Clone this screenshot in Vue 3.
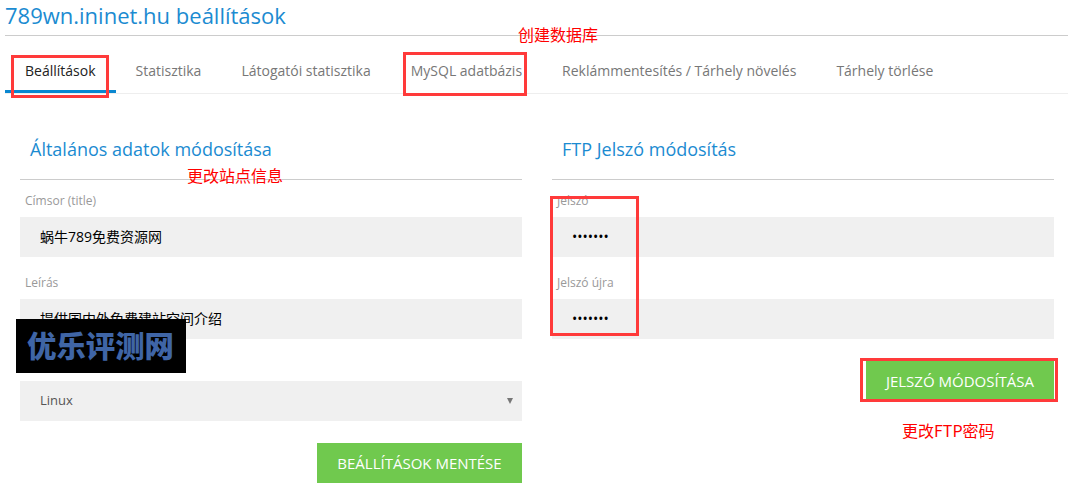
<script setup>
const tabs = [
  'Beállítások',
  'Statisztika',
  'Látogatói statisztika',
  'MySQL adatbázis',
  'Reklámmentesítés / Tárhely növelés',
  'Tárhely törlése',
]
</script>

<template>
  <div class="page">
    <h1 class="title">789wn.ininet.hu beállítások</h1>
    <nav class="tabs">
      <a v-for="(t, i) in tabs" :key="t" class="tab" :class="{ active: i === 0 }">{{ t }}</a>
    </nav>
    <div class="cols">
      <section class="col">
        <h2 class="heading">Általános adatok módosítása</h2>
        <div class="form">
          <div class="field">
            <label>Címsor (title)</label>
            <input class="control" type="text" value="蜗牛789免费资源网" />
          </div>
          <div class="field">
            <label>Leírás</label>
            <input class="control" type="text" value="提供国内外免费建站空间介绍" />
          </div>
          <div class="field">
            <label>&nbsp;</label>
            <div class="select-wrap">
              <select class="control select"><option>Linux</option></select>
              <span class="arrow"></span>
            </div>
          </div>
          <div class="actions"><button class="btn" type="button">BEÁLLÍTÁSOK MENTÉSE</button></div>
        </div>
      </section>
      <section class="col">
        <h2 class="heading">FTP Jelszó módosítás</h2>
        <div class="form">
          <div class="field">
            <label>Jelszó</label>
            <input class="control pass" type="password" value="1234567" />
          </div>
          <div class="field">
            <label>Jelszó újra</label>
            <input class="control pass" type="password" value="1234567" />
          </div>
          <div class="actions"><button class="btn narrow" type="button">JELSZÓ MÓDOSÍTÁSA</button></div>
        </div>
      </section>
    </div>

    <div class="mark box-a"></div>
    <div class="mark box-b"></div>
    <div class="mark box-c"></div>
    <div class="mark box-d"></div>
    <span class="note note-a">创建数据库</span>
    <span class="note note-b">更改站点信息</span>
    <span class="note note-c">更改FTP密码</span>
    <div class="stamp">优乐评测网</div>
  </div>
</template>

<style>
html, body { margin: 0; background: #fff; }
</style>

<style scoped>
.page {
  position: relative;
  width: 1068px;
  height: 486px;
  overflow: hidden;
  font-family: "Open Sans", "Noto Sans CJK SC", sans-serif;
  color: #555;
}
.title {
  margin: 0 0 0 5px;
  height: 35px;
  border-bottom: 1px solid #ccc;
  font-size: 22px;
  font-weight: 400;
  line-height: 30px;
  color: #1b8bd1;
}
.tabs {
  display: flex;
  margin-left: 5px;
  height: 57px;
  border-bottom: 1px solid #eee;
}
.tab {
  padding: 0 20px;
  height: 57px;
  box-sizing: border-box;
  font-size: 14px;
  line-height: 70px;
  color: #777;
}
.tab.active {
  color: #222;
  border-bottom: 3px solid #0a87d0;
}
.cols {
  display: flex;
  gap: 30px;
  padding: 0 14px 0 20px;
}
.col { width: 502px; }
.heading {
  margin: 0 0 5px;
  padding: 43px 0 0 10px;
  height: 86px;
  box-sizing: border-box;
  border-bottom: 1px solid #ccc;
  font-size: 18px;
  font-weight: 400;
  line-height: 24px;
  color: #1b8bd1;
}
.form { display: flex; flex-direction: column; gap: 10px; }
.field label {
  display: block;
  padding-left: 5px;
  font-size: 12px;
  line-height: 32px;
  color: #999;
}
.control {
  display: block;
  width: 100%;
  height: 40px;
  box-sizing: border-box;
  border: 0;
  border-radius: 0;
  outline: 0;
  padding: 0 20px 2px;
  background: #f0f0f0;
  font-family: inherit;
  font-size: 14px;
  color: #000;
}
.pass { font-size: 14px; }
.select-wrap { position: relative; }
.select {
  appearance: none;
  font-size: 13px;
  color: #555;
}
.arrow {
  position: absolute;
  right: 9px;
  top: 17px;
  border-left: 3.5px solid transparent;
  border-right: 3.5px solid transparent;
  border-top: 6px solid #777;
}
.actions { display: flex; justify-content: flex-end; margin-top: 12px; }
.btn {
  height: 40px;
  width: 205px;
  padding: 0;
  border: 0;
  background: #70c94e;
  color: #fff;
  font-family: inherit;
  font-size: 15px;
}
.btn.narrow { width: 188px; }

.mark {
  position: absolute;
  box-sizing: border-box;
  border: 3px solid #ff3a3a;
}
.box-a { left: 11px; top: 55px; width: 98px; height: 43px; }
.box-b { left: 403px; top: 52px; width: 124px; height: 44px; }
.box-c { left: 550px; top: 196px; width: 89px; height: 140px; }
.box-d { left: 860px; top: 358px; width: 198px; height: 44px; }
.note {
  position: absolute;
  font-family: "Noto Sans CJK SC", sans-serif;
  font-size: 16px;
  line-height: 20px;
  color: #f00;
}
.note-a { left: 518px; top: 24px; }
.note-b { left: 187px; top: 165px; }
.note-c { left: 902px; top: 420px; }
.stamp {
  position: absolute;
  left: 16px;
  top: 319px;
  width: 170px;
  height: 54px;
  padding-left: 11px;
  box-sizing: border-box;
  background: #000;
  font-family: "Noto Sans CJK SC", sans-serif;
  font-size: 29.4px;
  font-weight: 900;
  line-height: 51px;
  color: #3f65a6;
}
</style>
